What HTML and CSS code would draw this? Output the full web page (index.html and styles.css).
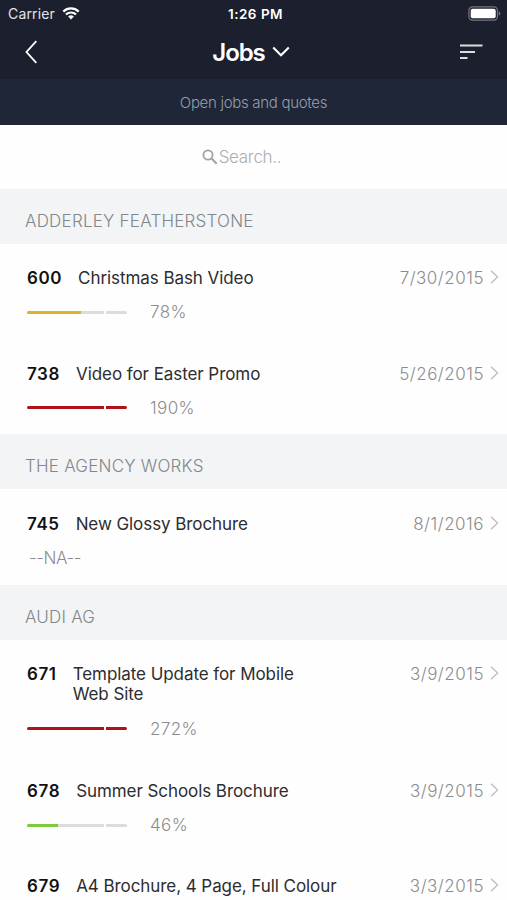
FILE: index.html
```html
<!doctype html>
<html lang="en">

<head>
	<meta charset="UTF-8" />
	<meta name="viewport" content="width=device-width, initial-scale=1.0" />
	<title>Jobs</title>
	<link rel="stylesheet" href="styles.css">
</head>

<body>
	<header class="header">
		<div class="status">
			<div class="carrier">
				<span>Carrier</span>
				<svg width="18" height="13" viewBox="0 0 18 13">
					<path d="M1.3 4.6a11 11 0 0 1 15.4 0M4 7.5a7.2 7.2 0 0 1 10 0" fill="none" stroke="#fff" stroke-width="2.2" />
					<path d="M6.1 9.6a4.2 4.2 0 0 1 5.8 0L9 12.6z" fill="#fff" />
				</svg>
			</div>
			<span class="time">1:26 PM</span>
			<svg class="battery" width="33" height="15" viewBox="0 0 33 15">
				<rect x="0.9" y="0.9" width="28.6" height="13.2" rx="3.6" fill="none" stroke="#77747f" stroke-width="1.2" />
				<rect x="2.7" y="2.7" width="25" height="9.6" rx="2" fill="#fff" />
				<path d="M30.8 5.2q1.6.8 1.6 2.3t-1.6 2.3z" fill="#77747f" />
			</svg>
		</div>
		<nav class="navbar">
			<svg width="14" height="26" viewBox="0 0 14 26">
				<path d="M12.3 2.2L2.5 13l9.8 10.8" fill="none" stroke="#fff" stroke-width="1.8" />
			</svg>
			<h1 class="title">
				<span>Jobs</span>
				<svg width="18" height="12" viewBox="0 0 18 12">
					<path d="M1.2 1.5L9 9.3l7.8-7.8" fill="none" stroke="#fff" stroke-width="2.1" />
				</svg>
			</h1>
			<svg width="24" height="18" viewBox="0 0 24 18">
				<path d="M1 2.5h22.5M1 9h15M1 15h7.5" fill="none" stroke="#dcdde3" stroke-width="2" />
			</svg>
		</nav>
	</header>

	<div class="filter"><span>Open jobs and quotes</span></div>

	<div class="search">
		<svg width="16" height="16" viewBox="0 0 16 16">
			<circle cx="6" cy="6" r="4.6" fill="none" stroke="#a4a4a6" stroke-width="1.8" />
			<path d="M9.3 9.3l5.4 5.4" stroke="#a4a4a6" stroke-width="2.2" />
		</svg>
		<span>Search..</span>
	</div>

	<main>
		<h2 class="client"><span>ADDERLEY FEATHERSTONE</span></h2>
		<div class="job">
			<div class="job_top">
				<b class="number">600</b>
				<span class="name">Christmas Bash Video</span>
				<span class="date">7/30/2015</span>
				<svg class="arrow" width="9" height="14" viewBox="0 0 9 14"><path d="M1 .8L7.6 7 1 13.2" /></svg>
			</div>
			<div class="progress">
				<div class="bar"><div class="fill yellow" style="width: 70%"></div></div>
				<div class="over"></div>
				<span class="percent">78%</span>
			</div>
		</div>
		<div class="job">
			<div class="job_top">
				<b class="number">738</b>
				<span class="name">Video for Easter Promo</span>
				<span class="date">5/26/2015</span>
				<svg class="arrow" width="9" height="14" viewBox="0 0 9 14"><path d="M1 .8L7.6 7 1 13.2" /></svg>
			</div>
			<div class="progress">
				<div class="bar"><div class="fill red" style="width: 100%"></div></div>
				<div class="over red"></div>
				<span class="percent">190%</span>
			</div>
		</div>

		<h2 class="client"><span>THE AGENCY WORKS</span></h2>
		<div class="job">
			<div class="job_top">
				<b class="number">745</b>
				<span class="name">New Glossy Brochure</span>
				<span class="date">8/1/2016</span>
				<svg class="arrow" width="9" height="14" viewBox="0 0 9 14"><path d="M1 .8L7.6 7 1 13.2" /></svg>
			</div>
			<div class="progress"><span class="na">--NA--</span></div>
		</div>

		<h2 class="client"><span>AUDI AG</span></h2>
		<div class="job tall">
			<div class="job_top">
				<b class="number">671</b>
				<span class="name">Template Update for Mobile<br>Web Site</span>
				<span class="date">3/9/2015</span>
				<svg class="arrow" width="9" height="14" viewBox="0 0 9 14"><path d="M1 .8L7.6 7 1 13.2" /></svg>
			</div>
			<div class="progress">
				<div class="bar"><div class="fill red" style="width: 100%"></div></div>
				<div class="over red"></div>
				<span class="percent">272%</span>
			</div>
		</div>
		<div class="job">
			<div class="job_top">
				<b class="number">678</b>
				<span class="name">Summer Schools Brochure</span>
				<span class="date">3/9/2015</span>
				<svg class="arrow" width="9" height="14" viewBox="0 0 9 14"><path d="M1 .8L7.6 7 1 13.2" /></svg>
			</div>
			<div class="progress">
				<div class="bar"><div class="fill green" style="width: 40%"></div></div>
				<div class="over"></div>
				<span class="percent">46%</span>
			</div>
		</div>
		<div class="job">
			<div class="job_top">
				<b class="number">679</b>
				<span class="name">A4 Brochure, 4 Page, Full Colour</span>
				<span class="date">3/3/2015</span>
				<svg class="arrow" width="9" height="14" viewBox="0 0 9 14"><path d="M1 .8L7.6 7 1 13.2" /></svg>
			</div>
		</div>
	</main>
</body>

</html>
```

FILE: styles.css
```css
* {
	box-sizing: border-box;
}

body {
	margin: 0;
	background-color: #fefefe;
	font-family: Inter, "Liberation Sans", sans-serif;
	font-size: 17px;
	color: #2d2d2f;
}

svg {
	display: block;
	flex: none;
}

.header {
	height: 79px;
	background-color: #1c1f2d;
	color: white;
}

.status {
	display: grid;
	grid-template-columns: 1fr auto 1fr;
	align-items: center;
	height: 27px;
	padding: 0 6px 0 8px;
	font-size: 14px;
}

.carrier {
	display: flex;
	align-items: center;
	gap: 7px;
	color: #e4e4e8;
	letter-spacing: 0.15px;
}

.time {
	padding-left: 2px;
	font-size: 13.5px;
	font-weight: 600;
	letter-spacing: 0.5px;
}

.battery {
	justify-self: end;
}

.navbar {
	display: flex;
	align-items: center;
	justify-content: space-between;
	height: 50px;
	padding: 0 24px;
}

.title {
	display: flex;
	align-items: center;
	gap: 7px;
	margin: 0;
	padding-left: 5px;
	font-size: 24px;
	font-weight: 600;
	letter-spacing: -1.1px;
}

.filter {
	display: flex;
	align-items: center;
	justify-content: center;
	height: 46px;
	background-color: #1e2638;
	color: #989eab;
	font-size: 15px;
	font-weight: 300;
	letter-spacing: -0.3px;
}

.search {
	display: flex;
	align-items: center;
	justify-content: center;
	gap: 1px;
	height: 64px;
	padding-right: 24px;
	color: #adadb0;
	font-weight: 300;
	letter-spacing: -0.3px;
}

.client {
	display: flex;
	align-items: center;
	height: 55px;
	margin: 0;
	padding: 9.2px 25px 0;
	background-color: #f2f4f6;
	color: #82878a;
	font-size: 17px;
	font-weight: 300;
	letter-spacing: 0.22px;
}

.job {
	height: 95.2px;
	padding: 24.4px 8px 0 27px;
}

.tall {
	height: 117.2px;
}

.job + .job {
	border-top: 1px solid #fbfbfb;
	padding-top: 23.4px;
}

.job:last-child {
	height: auto;
}

.job_top {
	display: flex;
	align-items: flex-start;
	line-height: 20.5px;
}

.number {
	margin-right: 16px;
	color: #111;
	font-weight: 600;
	letter-spacing: 0.6px;
}

.name {
	letter-spacing: -0.07px;
}

.date {
	margin-left: auto;
	margin-right: 6px;
	color: #8c8c8f;
	font-weight: 300;
	letter-spacing: 0.5px;
}

.arrow {
	margin-top: 2px;
}

.arrow path {
	fill: none;
	stroke: #bcbcc0;
	stroke-width: 1.2;
}

.progress {
	display: flex;
	align-items: center;
	height: 20px;
	margin-top: 13.6px;
}

.bar {
	width: 77px;
	height: 3px;
	margin-right: 2px;
	border-radius: 1.5px 0 0 1.5px;
	background-color: #dcdcde;
	overflow: hidden;
}

.fill {
	height: 3px;
}

.over {
	width: 21px;
	height: 3px;
	border-radius: 0 1.5px 1.5px 0;
	background-color: #dcdcde;
}

.yellow {
	background-color: #d9b52c;
}

.red {
	background-color: #b0121b;
}

.green {
	background-color: #7bcb3c;
}

.percent {
	margin-left: 23px;
	color: #8c8c8f;
	font-weight: 300;
	letter-spacing: 0.4px;
}

.na {
	margin-left: 2px;
	color: #8c8c8f;
	font-weight: 300;
	letter-spacing: -0.4px;
}
```
